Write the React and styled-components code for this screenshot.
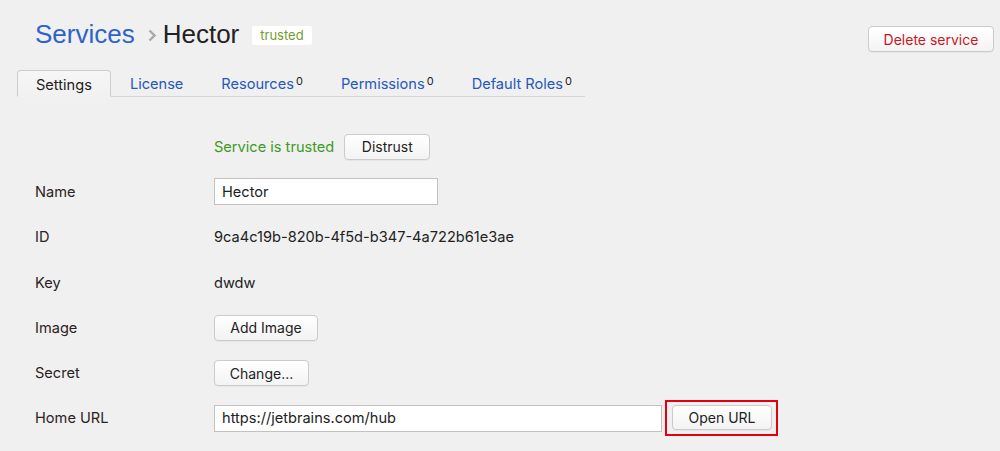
import React from 'react'
import styled, { createGlobalStyle } from 'styled-components'

const Global = createGlobalStyle`
  html, body { margin: 0; padding: 0; background: #f0f0f0; }
  body { font-family: Inter, "Liberation Sans", Arial, sans-serif; color: #262626; }
`

const Page = styled.div`
  width: 1000px;
  height: 451px;
  overflow: hidden;
  padding: 0 6px 0 17px;
  box-sizing: border-box;
`

const Header = styled.div`
  display: flex;
  justify-content: space-between;
  align-items: flex-start;
  height: 70px;
`

const Title = styled.div`
  display: flex;
  align-items: center;
  margin: 17px 0 0 18px;
  height: 34px;
  font-family: "Liberation Sans", Arial, sans-serif;
  font-size: 26px;
`

const Crumb = styled.span`
  color: #2c63c9;
`

const Current = styled.span`
  color: #222;
`

const Chevron = styled.svg`
  margin: 2px 7px 0 13px;
`

const Badge = styled.span`
  margin-left: 13px;
  margin-top: 2px;
  background: #fff;
  color: #6d9f2f;
  font-family: Inter, sans-serif;
  font-size: 13px;
  height: 19px;
  line-height: 19px;
  padding: 0 8px;
  border-radius: 2px;
`

const Button = styled.button`
  font-family: inherit;
  font-size: 14px;
  white-space: nowrap;
  flex-shrink: 0;
  height: ${p => p.$h || 26}px;
  width: ${p => p.$w ? p.$w + 'px' : 'auto'};
  padding: 0;
  color: ${p => p.$danger ? '#c8171f' : '#222'};
  background: linear-gradient(#ffffff, #f3f3f3);
  border: 1px solid #cbcbcb;
  border-radius: 4px;
  box-shadow: 0 1px 0 rgba(0,0,0,0.04);
  cursor: pointer;
`

const DeleteButton = styled(Button)`
  margin-top: 26px;
`

const Tabs = styled.div`
  display: flex;
  width: 568px;
  height: 26px;
  border-bottom: 1px solid #d6d6d6;
`

const Tab = styled.div`
  display: flex;
  align-items: center;
  white-space: nowrap;
  flex-shrink: 0;
  box-sizing: border-box;
  padding: 2px ${p => p.$active ? 18 : 19}px 0;
  height: 26px;
  font-size: 14.6px;
  color: ${p => p.$active ? '#222' : '#2557bd'};
  ${p => p.$active && `
    height: 27px;
    background: linear-gradient(#f6f6f6, #f1f1f1);
    border: 1px solid #cdcdcd;
    border-bottom: 1px solid #f1f1f1;
    border-radius: 4px 4px 0 0;
    margin-bottom: -1px;
  `}
`

const Sup = styled.sup`
  font-size: 11px;
  color: #222;
  margin-left: 2px;
  position: relative;
  top: -3px;
  vertical-align: top;
  line-height: 1;
`

const Form = styled.div`
  display: grid;
  grid-template-columns: 179px 1fr;
  grid-auto-rows: 45.3px;
  align-items: center;
  margin: 27px 0 0 18px;
  font-size: 14.6px;
`

const Label = styled.div`
  color: #2b2323;
`

const Value = styled.div`
  display: flex;
  align-items: center;
  gap: ${p => p.$gap || 0}px;
  color: #222;
  white-space: nowrap;
`

const Trusted = styled.span`
  color: #3d9a1e;
`

const Input = styled.input`
  box-sizing: border-box;
  width: ${p => p.$w}px;
  height: 27px;
  border: 1px solid #c2c2c2;
  background: #fff;
  font-family: inherit;
  font-size: 14.6px;
  color: #222;
  padding: 0 7px;
  outline: none;
`

const Highlight = styled.span`
  display: inline-flex;
  border: 2px solid #e5000d;
  padding: 3px 4px 4px 5px;
  margin-left: 3px;
`

const tabs = [
  { name: 'Settings', active: true },
  { name: 'License' },
  { name: 'Resources', count: 0 },
  { name: 'Permissions', count: 0 },
  { name: 'Default Roles', count: 0 },
]

export default function App() {
  return (
    <Page>
      <Global />
      <Header>
        <Title>
          <Crumb>Services</Crumb>
          <Chevron width="8" height="13" viewBox="0 0 8 13">
            <polyline points="1.5,1.5 6.5,6.5 1.5,11.5" fill="none" stroke="#a9a9a9" strokeWidth="2.4" />
          </Chevron>
          <Current>Hector</Current>
          <Badge>trusted</Badge>
        </Title>
        <DeleteButton $danger $w={126}>Delete service</DeleteButton>
      </Header>

      <Tabs>
        {tabs.map(t => (
          <Tab key={t.name} $active={t.active}>
            {t.name}
            {t.count !== undefined && <Sup>{t.count}</Sup>}
          </Tab>
        ))}
      </Tabs>

      <Form>
        <Label />
        <Value $gap={10}>
          <Trusted>Service is trusted</Trusted>
          <Button $w={86}>Distrust</Button>
        </Value>

        <Label>Name</Label>
        <Value><Input $w={224} defaultValue="Hector" /></Value>

        <Label>ID</Label>
        <Value>9ca4c19b-820b-4f5d-b347-4a722b61e3ae</Value>

        <Label>Key</Label>
        <Value>dwdw</Value>

        <Label>Image</Label>
        <Value><Button $w={104}>Add Image</Button></Value>

        <Label>Secret</Label>
        <Value><Button $w={95}>Change...</Button></Value>

        <Label>Home URL</Label>
        <Value>
          <Input $w={448} defaultValue="https://jetbrains.com/hub" />
          <Highlight>
            <Button $h={25} $w={100}>Open URL</Button>
          </Highlight>
        </Value>
      </Form>
    </Page>
  )
}
